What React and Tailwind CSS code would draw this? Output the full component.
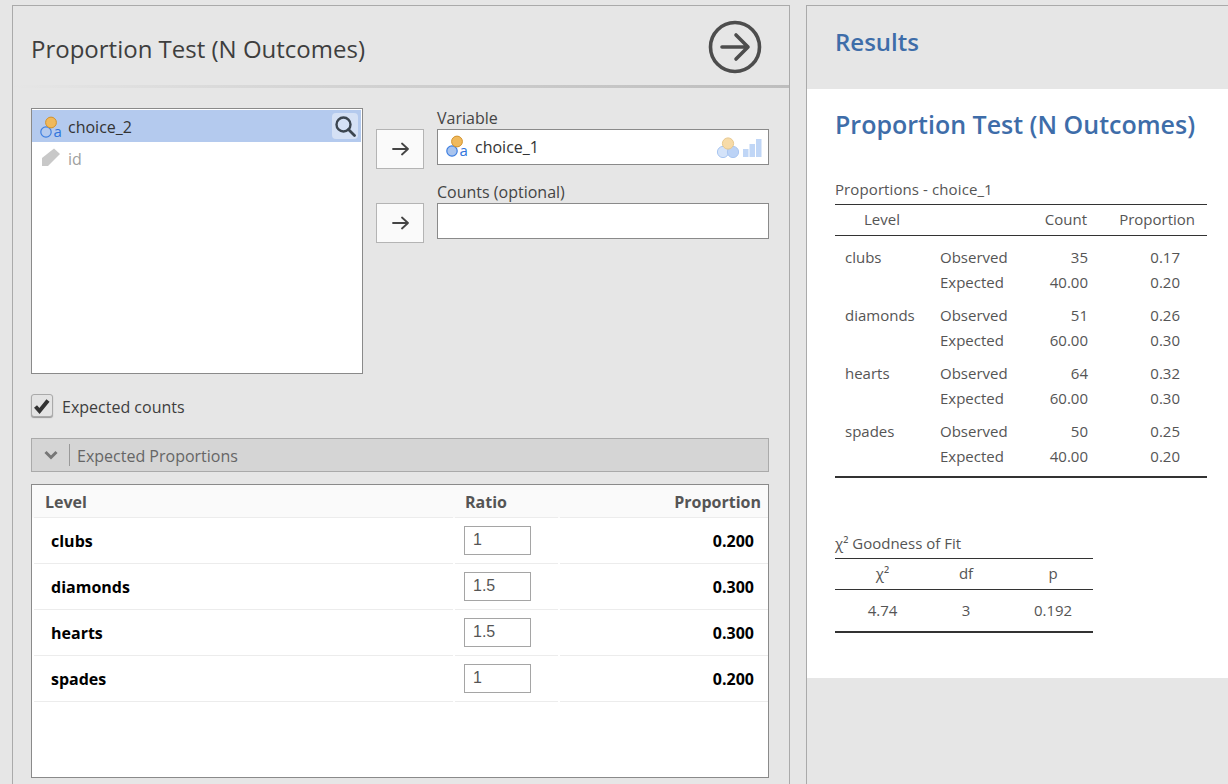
const levels = [
  { name: "clubs", ratio: "1", prop: "0.200" },
  { name: "diamonds", ratio: "1.5", prop: "0.300" },
  { name: "hearts", ratio: "1.5", prop: "0.300" },
  { name: "spades", ratio: "1", prop: "0.200" },
];

const results = [
  { name: "clubs", obs: "35", exp: "40.00", p1: "0.17", p2: "0.20" },
  { name: "diamonds", obs: "51", exp: "60.00", p1: "0.26", p2: "0.30" },
  { name: "hearts", obs: "64", exp: "60.00", p1: "0.32", p2: "0.30" },
  { name: "spades", obs: "50", exp: "40.00", p1: "0.25", p2: "0.20" },
];

function NominalIcon({ filled }) {
  const dy = filled ? -2 : 0;
  return (
    <svg width="24" height="24" viewBox="0 0 24 24" className="shrink-0 overflow-visible">
      <g transform={`translate(0 ${dy})`}>
        <circle cx="7" cy="18" r="5.2" fill={filled ? "#a9c4ee" : "none"} stroke="#3e7fe0" strokeWidth="1.2" />
        <circle cx="12" cy="8.5" r="5.4" fill="#f0b95c" stroke="#d2922c" strokeWidth="1" />
        <text x="14.5" y="23" fontSize="15" fill="#2f74dc" fontFamily="Open Sans, sans-serif">a</text>
      </g>
    </svg>
  );
}

function ArrowButton() {
  return (
    <button className="w-12 h-10 shrink-0 flex items-center justify-center bg-[#fafafa] border border-[#b4b4b4]">
      <svg width="17" height="16" viewBox="0 0 17 16">
        <path d="M1 8H16M10 2.5L16 8L10 13.5" fill="none" stroke="#444" strokeWidth="1.8" strokeLinecap="round" strokeLinejoin="round" />
      </svg>
    </button>
  );
}

function ResultsRow({ name, label, count, prop }) {
  return (
    <div className="grid grid-cols-[105px_90px_58px_92px] h-[25px] items-center">
      <span className="pl-[10px]">{name}</span>
      <span>{label}</span>
      <span className="text-right">{count}</span>
      <span className="text-right">{prop}</span>
    </div>
  );
}

export default function App() {
  return (
    <div className="h-[784px] overflow-hidden bg-[#e6e6e6] flex pt-[5px] pl-3 font-['Open_Sans',sans-serif] text-[#333]">
      {/* options panel */}
      <div className="w-[778px] h-full border-l border-r border-t border-[#aaa] shrink-0">
        <div className="h-[79px] flex items-center justify-between pl-[18px] pr-[27px]">
          <h1 className="text-[24px] mt-[7px] text-[#3e3e3e]">Proportion Test (N Outcomes)</h1>
          <svg width="54" height="54" viewBox="0 0 54 54" className="mt-[3px]">
            <circle cx="27" cy="27" r="24.5" fill="none" stroke="#4d4d4d" strokeWidth="3.6" />
            <path d="M14 27h26M28 15l12 12-12 12" fill="none" stroke="#4d4d4d" strokeWidth="3.6" strokeLinecap="round" strokeLinejoin="round" />
          </svg>
        </div>
        <div className="h-[3px] bg-linear-to-r from-[#e6e6e6] via-[#cfcfcf] to-[#bdbdbd]" />

        <div className="pl-[18px] pr-[20px] pt-5 text-[16px]">
          <div className="flex">
            <div className="w-[332px] h-[266px] bg-white border border-[#8a8a8a] pt-px pr-px shrink-0">
              <div className="h-8 bg-[#b4caee] flex items-center pl-[7px] pr-[3px]">
                <NominalIcon />
                <span className="ml-[5px] mt-px flex-1">choice_2</span>
                <span className="w-[26px] h-[26px] rounded-sm bg-[#d5e1f5] flex items-center justify-center">
                  <svg width="22" height="22" viewBox="0 0 22 22">
                    <circle cx="9.5" cy="9.5" r="7" fill="none" stroke="#3c4650" strokeWidth="2.4" />
                    <path d="M14.5 14.5L20.5 20.5" stroke="#3c4650" strokeWidth="2.8" strokeLinecap="round" />
                  </svg>
                </span>
              </div>
              <div className="h-8 flex items-center pl-[8px] text-[#a0a0a0]">
                <svg width="22" height="22" viewBox="0 0 22 22" className="shrink-0">
                  <path d="M2 19V11L14 1.5L20 7L8 19Z" fill="#c8c8c8" />
                </svg>
                <span className="ml-[6px] mt-px">id</span>
              </div>
            </div>

            <div className="ml-[13px] flex-1 flex flex-col gap-[13px]">
              <div className="flex gap-[13px]">
                <div className="pt-[21px]"><ArrowButton /></div>
                <div className="flex-1">
                  <div className="h-[21px] leading-[21px] text-[#444]">Variable</div>
                  <div className="h-9 bg-white border border-[#8a8a8a] flex items-center pl-[7px] pr-[6px]">
                    <NominalIcon filled />
                    <span className="ml-[6px] flex-1">choice_1</span>
                    <svg width="50" height="24" viewBox="0 0 50 24">
                      <circle cx="11" cy="17" r="5.6" fill="#d4e3f9" stroke="#a9c6f1" />
                      <circle cx="21" cy="17" r="5.6" fill="#bcd3f6" stroke="#a9c6f1" />
                      <circle cx="16" cy="8.5" r="5.6" fill="#f7dba8" stroke="#e8c88e" />
                      <rect x="31" y="14" width="5.5" height="8" fill="#c0d6f6" />
                      <rect x="37.5" y="9" width="5.5" height="13" fill="#c0d6f6" />
                      <rect x="44" y="4" width="5.5" height="18" fill="#c0d6f6" />
                    </svg>
                  </div>
                </div>
              </div>
              <div className="flex gap-[13px]">
                <div className="pt-[21px]"><ArrowButton /></div>
                <div className="flex-1">
                  <div className="h-[21px] leading-[21px] text-[#444]">Counts (optional)</div>
                  <div className="h-9 bg-white border border-[#8a8a8a]" />
                </div>
              </div>
            </div>
          </div>

          <label className="flex items-start mt-5 text-[#3e3e3e]">
            <span className="w-[22px] h-[23px] rounded-[3px] bg-[#e4e4e4] border border-[#aaa] shadow-[0_1px_1px_#999] flex items-center justify-center">
              <svg width="18" height="18" viewBox="0 0 18 18">
                <path d="M2.5 9.5L6.5 14L15 3.5" fill="none" stroke="#333" strokeWidth="4" />
              </svg>
            </span>
            <span className="ml-[9px] leading-[26px]">Expected counts</span>
          </label>

          <div className="mt-[18px] h-[34px] bg-[#d5d5d5] border border-[#aaa] flex items-center text-[#666]">
            <span className="w-[38px] flex justify-center border-r border-[#999] h-[22px] items-center">
              <svg width="14" height="10" viewBox="0 0 14 10">
                <path d="M1.5 2L7 7.5L12.5 2" fill="none" stroke="#777" strokeWidth="3" />
              </svg>
            </span>
            <span className="ml-[7px] mt-px">Expected Proportions</span>
          </div>

          <div className="mt-3 h-[294px] bg-white border border-[#8a8a8a]">
            <div className="h-[33px] bg-[#fafafa] flex gap-[2px] font-bold text-[#555]">
              <span className="ml-[2px] w-[419px] pl-[11px] leading-[34px] border-b border-[#ececec]">Level</span>
              <span className="w-[103px] pl-[10px] leading-[34px] border-b border-[#ececec]">Ratio</span>
              <span className="flex-1 pr-[7px] leading-[34px] text-right border-b border-[#ececec]">Proportion</span>
            </div>
            {levels.map((l) => (
              <div key={l.name} className="h-[46px] flex gap-[2px] font-bold text-black">
                <span className="ml-[2px] w-[419px] pl-[17px] flex items-center border-b border-[#ececec]">{l.name}</span>
                <span className="w-[103px] pl-[9px] flex items-center border-b border-[#ececec]">
                  <span className="w-[67px] h-[29px] bg-white border border-[#a5a5a5] pl-2 leading-[26px] font-normal text-[#555] font-['Liberation_Sans',sans-serif]">
                    {l.ratio}
                  </span>
                </span>
                <span className="flex-1 pr-[14px] flex items-center justify-end border-b border-[#ececec]">{l.prop}</span>
              </div>
            ))}
          </div>
        </div>
      </div>

      {/* results panel */}
      <div className="ml-4 flex-1 border-l border-t border-[#aaa] flex flex-col min-w-0">
        <div className="h-[83px] pl-[28px] pt-[18px] text-[24px] font-semibold text-[#3e6da9]">Results</div>
        <div className="h-[589px] bg-white pl-[28px] text-[15px] text-[#555]">
          <h2 className="pt-[17px] text-[25px] leading-[36px] font-semibold text-[#3e6da9]">Proportion Test (N Outcomes)</h2>

          <div className="mt-[33px] w-[372px]">
            <div className="h-[29px] leading-[28px] tracking-[0.1px]">Proportions - choice_1</div>
            <div className="border-t border-b border-[#333] h-[32px] pb-[2px] grid grid-cols-[105px_90px_57px_108px] items-center">
              <span className="pl-[29px]">Level</span>
              <span />
              <span className="text-right">Count</span>
              <span className="text-right">Proportion</span>
            </div>
            <div className="pt-[9px] pb-[7px] border-b-2 border-[#333] flex flex-col gap-2">
              {results.map((r) => (
                <div key={r.name}>
                  <ResultsRow name={r.name} label="Observed" count={r.obs} prop={r.p1} />
                  <ResultsRow label="Expected" count={r.exp} prop={r.p2} />
                </div>
              ))}
            </div>
          </div>

          <div className="mt-[51px] w-[258px]">
            <div className="h-[29px] leading-[28px]">χ² Goodness of Fit</div>
            <div className="border-t border-b border-[#333] h-[32px] pb-[2px] grid grid-cols-[95px_72px_91px] items-center text-center">
              <span>χ²</span>
              <span>df</span>
              <span className="pl-[11px]">p</span>
            </div>
            <div className="h-[43px] border-b-2 border-[#333] grid grid-cols-[95px_72px_91px] items-center text-center">
              <span>4.74</span>
              <span>3</span>
              <span className="pl-[11px]">0.192</span>
            </div>
          </div>
        </div>
      </div>
    </div>
  );
}
